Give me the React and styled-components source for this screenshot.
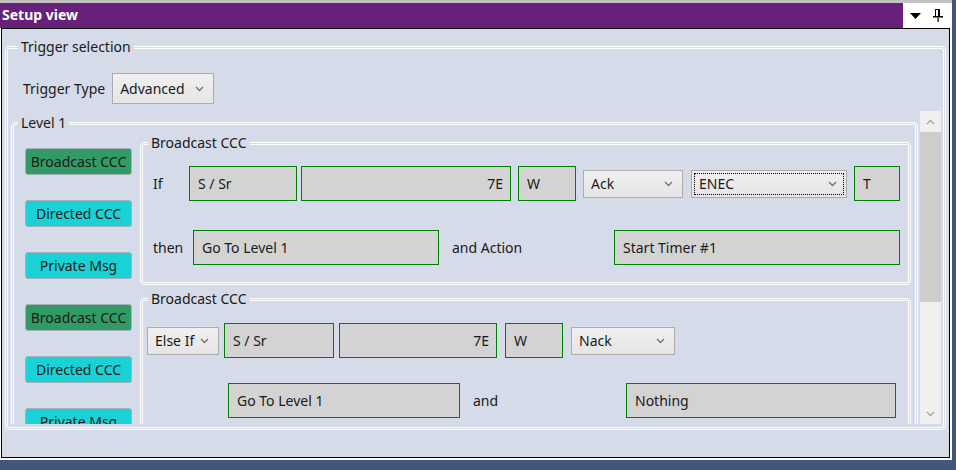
import React from "react";
import styled, { createGlobalStyle } from "styled-components";

const Global = createGlobalStyle`
  html, body { margin: 0; padding: 0; }
  body {
    background: #44577a;
    width: 956px;
    height: 470px;
    overflow: hidden;
    font-family: "Noto Sans", "Open Sans", sans-serif;
    font-size: 14px;
    color: #1a1a1a;
  }
`;

const Window = styled.div`
  width: 952px;
  height: 460px;
  background: #fff;
  border-top: 3px solid #c2c2c2;
  box-sizing: border-box;
  display: flex;
  flex-direction: column;
`;

const TitleBar = styled.div`
  height: 25px;
  display: flex;
  flex: none;
`;

const TitleText = styled.div`
  flex: 1;
  background: #68217a;
  color: #fff;
  font-weight: 700;
  font-size: 14px;
  line-height: 24px;
  padding-left: 2px;
`;

const TitleButtons = styled.div`
  width: 49px;
  background: #fff;
  display: flex;
  align-items: center;
  padding-left: 7px;
  gap: 12px;
  box-sizing: border-box;
`;

const Panel = styled.div`
  flex: 1;
  margin: 0 2px 2px 1px;
  border: 1px solid #000;
  background: #d5dbe9;
  display: flex;
  flex-direction: column;
  min-height: 0;
`;

const Group = styled.fieldset`
  margin: ${(p) => p.$margin || "0"};
  padding: 0;
  border: 3px double #fff;
  border-radius: 4px;
  min-width: 0;
  box-sizing: border-box;
  height: ${(p) => (p.$h ? `${p.$h}px` : "auto")};
  flex: ${(p) => (p.$grow ? 1 : "none")};
  display: flex;
  flex-direction: column;
`;

const Legend = styled.legend`
  margin-left: ${(p) => p.$ml}px;
  padding: 0 3px;
  line-height: 20px;
  font-size: 14px;
  color: #1a1a1a;
`;

const TriggerRow = styled.div`
  display: flex;
  align-items: center;
  padding: 16px 0 0 15px;
  gap: 7px;
`;

const Label = styled.span`
  display: inline-block;
  width: ${(p) => (p.$w ? `${p.$w}px` : "auto")};
  margin-left: ${(p) => p.$ml || 0}px;
  flex: none;
  white-space: nowrap;
  color: #1a1a1a;
  line-height: 20px;
`;

const Combo = styled.div`
  width: ${(p) => p.$w}px;
  height: ${(p) => p.$h || 28}px;
  margin-left: ${(p) => p.$ml || 0}px;
  flex: none;
  box-sizing: border-box;
  border: 1px solid #acacac;
  background: linear-gradient(#f0f0f0, #e5e5e5);
  display: flex;
  align-items: center;
  justify-content: space-between;
  padding: 0 9px 0 7px;
  color: #1a1a1a;
  outline: ${(p) => (p.$focus ? "1px dotted #000" : "none")};
  outline-offset: -4px;
`;

const Chevron = ({ up, color = "#707070" }) => (
  <svg width="9" height="6" viewBox="0 0 9 6" style={{ flex: "none" }}>
    <path
      d={up ? "M1 5 L4.5 1.5 L8 5" : "M1 1 L4.5 4.5 L8 1"}
      fill="none"
      stroke={color}
      strokeWidth="1.3"
    />
  </svg>
);

const ComboBox = ({ children, ...rest }) => (
  <Combo {...rest}>
    <span>{children}</span>
    <Chevron />
  </Combo>
);

const ScrollViewer = styled.div`
  margin: 7px 2px 0 0;
  height: 313px;
  display: flex;
  flex: none;
`;

const ScrollContent = styled.div`
  flex: 1;
  overflow: hidden;
  min-width: 0;
`;

const ScrollBar = styled.div`
  width: 21px;
  background: #f0f0f0;
  display: flex;
  flex-direction: column;
  flex: none;
`;

const ScrollBtn = styled.div`
  height: 21px;
  display: flex;
  align-items: center;
  justify-content: center;
  flex: none;
`;

const Thumb = styled.div`
  height: 170px;
  background: #cdcdcd;
  flex: none;
`;

const Track = styled.div`
  flex: 1;
`;

const BottomGap = styled.div`
  height: 3px;
  flex: none;
`;

const LevelBody = styled.div`
  padding: 0 4px 0 11px;
  display: flex;
  flex-direction: column;
`;

const ItemRow = styled.div`
  display: flex;
  align-items: flex-start;
  gap: 8px;
  flex: none;
`;

const ButtonCol = styled.div`
  width: 107px;
  padding-top: 15px;
  display: flex;
  flex-direction: column;
  gap: 25px;
  flex: none;
`;

const MsgButton = styled.div`
  height: 27px;
  box-sizing: border-box;
  border: 1px solid #a3b0b8;
  border-radius: 3px;
  background: ${(p) => (p.$active ? "#319a65" : "#1ad2d6")};
  display: flex;
  align-items: center;
  justify-content: center;
  color: #1a1a1a;
  white-space: nowrap;
`;

const FieldRow = styled.div`
  display: flex;
  align-items: center;
  height: 35px;
  padding-left: ${(p) => p.$pl || 0}px;
  margin-top: ${(p) => p.$mt || 0}px;
  flex: none;
`;

const TextBox = styled.div`
  width: ${(p) => p.$w}px;
  height: 35px;
  margin-left: ${(p) => p.$ml || 0}px;
  flex: none;
  box-sizing: border-box;
  border: 1px solid #008000;
  background: #d3d3d3;
  display: flex;
  align-items: center;
  justify-content: ${(p) => (p.$right ? "flex-end" : "flex-start")};
  padding: 0 7px 0 8px;
  color: #1a1a1a;
  white-space: nowrap;
`;

const PinIcon = () => (
  <svg width="10" height="13" viewBox="0 0 10 13">
    <rect x="2.5" y="0.5" width="4" height="7" fill="none" stroke="#000" strokeWidth="1" />
    <rect x="5" y="0.5" width="2" height="7" fill="#000" />
    <rect x="0" y="7" width="10" height="1.5" fill="#000" />
    <rect x="4.5" y="8.5" width="1.2" height="4.5" fill="#000" />
  </svg>
);

const DropIcon = () => (
  <svg width="11" height="6" viewBox="0 0 11 6">
    <path d="M0 0 L11 0 L5.5 6 Z" fill="#000" />
  </svg>
);

const Buttons = () => (
  <ButtonCol>
    <MsgButton $active>Broadcast CCC</MsgButton>
    <MsgButton>Directed CCC</MsgButton>
    <MsgButton>Private Msg</MsgButton>
  </ButtonCol>
);

export default function App() {
  return (
    <>
      <Global />
      <Window>
        <TitleBar>
          <TitleText>Setup view</TitleText>
          <TitleButtons>
            <DropIcon />
            <PinIcon />
          </TitleButtons>
        </TitleBar>
        <Panel>
          <Group $margin="8px 3px 0 3px">
            <Legend $ml={10}>Trigger selection</Legend>
            <TriggerRow>
              <Label>Trigger Type</Label>
              <ComboBox $w={102} $h={31}>Advanced</ComboBox>
            </TriggerRow>
            <ScrollViewer>
              <ScrollContent>
                <Group $margin="2px 2px 0 3px">
                  <Legend $ml={4}>Level 1</Legend>
                  <LevelBody>
                    <ItemRow>
                      <Buttons />
                      <Group $h={152} $margin="0 0 4px 0" $grow>
                        <Legend $ml={5}>Broadcast CCC</Legend>
                        <FieldRow $pl={10} $mt={13}>
                          <Label $w={36}>If</Label>
                          <TextBox $w={108}>S / Sr</TextBox>
                          <TextBox $w={210} $ml={4} $right>7E</TextBox>
                          <TextBox $w={58} $ml={7}>W</TextBox>
                          <ComboBox $w={100} $ml={7}>Ack</ComboBox>
                          <ComboBox $w={156} $ml={8} $focus>ENEC</ComboBox>
                          <TextBox $w={46} $ml={7}>T</TextBox>
                        </FieldRow>
                        <FieldRow $pl={10} $mt={29}>
                          <Label $w={40}>then</Label>
                          <TextBox $w={246}>Go To Level 1</TextBox>
                          <Label $w={162} $ml={13}>and Action</Label>
                          <TextBox $w={286}>Start Timer #1</TextBox>
                        </FieldRow>
                      </Group>
                    </ItemRow>
                    <ItemRow>
                      <Buttons />
                      <Group $h={152} $margin="0 0 4px 0" $grow>
                        <Legend $ml={5}>Broadcast CCC</Legend>
                        <FieldRow $pl={4} $mt={14}>
                          <ComboBox $w={72}>Else If</ComboBox>
                          <TextBox $w={110} $ml={5}>S / Sr</TextBox>
                          <TextBox $w={158} $ml={5} $right>7E</TextBox>
                          <TextBox $w={58} $ml={8}>W</TextBox>
                          <ComboBox $w={104} $ml={8}>Nack</ComboBox>
                        </FieldRow>
                        <FieldRow $pl={85} $mt={25}>
                          <TextBox $w={232}>Go To Level 1</TextBox>
                          <Label $w={153} $ml={13}>and</Label>
                          <TextBox $w={270}>Nothing</TextBox>
                        </FieldRow>
                      </Group>
                    </ItemRow>
                  </LevelBody>
                </Group>
              </ScrollContent>
              <ScrollBar>
                <ScrollBtn>
                  <Chevron up color="#a0a0a0" />
                </ScrollBtn>
                <Thumb />
                <Track />
                <ScrollBtn>
                  <Chevron color="#a0a0a0" />
                </ScrollBtn>
              </ScrollBar>
            </ScrollViewer>
            <BottomGap />
          </Group>
        </Panel>
      </Window>
    </>
  );
}
